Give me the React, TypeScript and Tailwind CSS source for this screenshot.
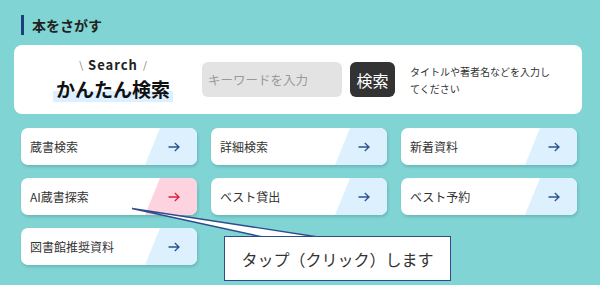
import React from 'react';

type LinkItem = { label: string; accent?: boolean };

const links: LinkItem[] = [
  { label: '蔵書検索' },
  { label: '詳細検索' },
  { label: '新着資料' },
  { label: 'AI蔵書探索', accent: true },
  { label: 'ベスト貸出' },
  { label: 'ベスト予約' },
  { label: '図書館推奨資料' },
];

const Arrow: React.FC<{ color: string }> = ({ color }) => (
  <svg width="12" height="10" viewBox="0 0 12 10" fill="none" className="relative z-10 mr-[17px]">
    <path d="M0.5 5H11M6.8 1L11 5L6.8 9" stroke={color} strokeWidth="1.3" />
  </svg>
);

const LinkCard: React.FC<LinkItem> = ({ label, accent }) => (
  <div className="relative flex h-[37px] items-center justify-between overflow-hidden rounded-[7px] bg-white shadow-[1px_2px_3px_rgba(0,60,70,0.18)]">
    <div
      className={`absolute inset-y-0 right-0 w-[52px] [clip-path:polygon(15px_0,100%_0,100%_100%,0_100%)] ${
        accent ? 'bg-[#fdd3df]' : 'bg-[#ddf0fd]'
      }`}
    />
    <span className="relative z-10 pl-[9px] text-[12px] text-[#333]">{label}</span>
    <Arrow color={accent ? '#d9243c' : '#2b5291'} />
  </div>
);

export default function App() {
  return (
    <div className="relative h-[285px] w-[600px] overflow-hidden bg-[#80d4d3] font-['Noto_Sans_CJK_JP',sans-serif]">
      {/* heading */}
      <div className="ml-[21px] mt-[15px] flex h-[20px] items-center">
        <div className="h-[20px] w-[3px] bg-[#1d3f7c]" />
        <h2 className="ml-[8px] text-[14px] font-bold text-[#222]">本をさがす</h2>
      </div>

      {/* quick search */}
      <div className="ml-[14px] mt-[10px] flex h-[69px] w-[568px] items-center rounded-[8px] bg-white">
        <div className="flex w-[188px] flex-col items-center pl-[10px]">
          <div className="flex h-[14px] items-center gap-[5px] leading-[14px]">
            <span className="text-[10px] leading-[12px] text-[#777]">\</span>
            <span className="text-[13px] font-bold leading-[14px] tracking-[1px] text-[#222]">Search</span>
            <span className="text-[10px] leading-[12px] text-[#777]">/</span>
          </div>
          <span className="mt-[6px] inline-block bg-[linear-gradient(to_bottom,transparent_13px,#ddf0ff_13px)] px-[3px] pb-[3px] text-[19px] font-bold leading-[21px] text-[#111]">
            かんたん検索
          </span>
        </div>
        <input
          className="h-[35px] w-[140px] rounded-[6px] bg-[#e3e3e3] px-[6px] text-[12.5px] text-[#333] outline-none placeholder:text-[#999]"
          placeholder="キーワードを入力"
        />
        <button className="ml-[8px] h-[35px] w-[45px] rounded-[6px] bg-[#333] text-[16px] text-white">検索</button>
        <p className="ml-[15px] w-[145px] text-[10px] leading-[17px] text-[#333]">
          タイトルや著者名などを入力してください
        </p>
      </div>

      {/* link grid */}
      <div className="ml-[21px] mt-[14px] grid grid-cols-[176px_176px_176px] gap-x-[14px] gap-y-[13px]">
        {links.map((l) => (
          <LinkCard key={l.label} {...l} />
        ))}
      </div>

      {/* callout */}
      <svg className="absolute left-0 top-0" width="600" height="285" viewBox="0 0 600 285">
        <path d="M132 208.5L263 237L318 237Z" fill="#fff" stroke="#2d4c8c" strokeWidth="1.3" />
      </svg>
      <div className="absolute left-[224px] top-[236px] flex h-[45px] w-[227px] items-center justify-center border-[1.5px] border-[#2d4c8c] bg-white text-[16px] text-[#333]">
        タップ（クリック）します
      </div>
    </div>
  );
}
